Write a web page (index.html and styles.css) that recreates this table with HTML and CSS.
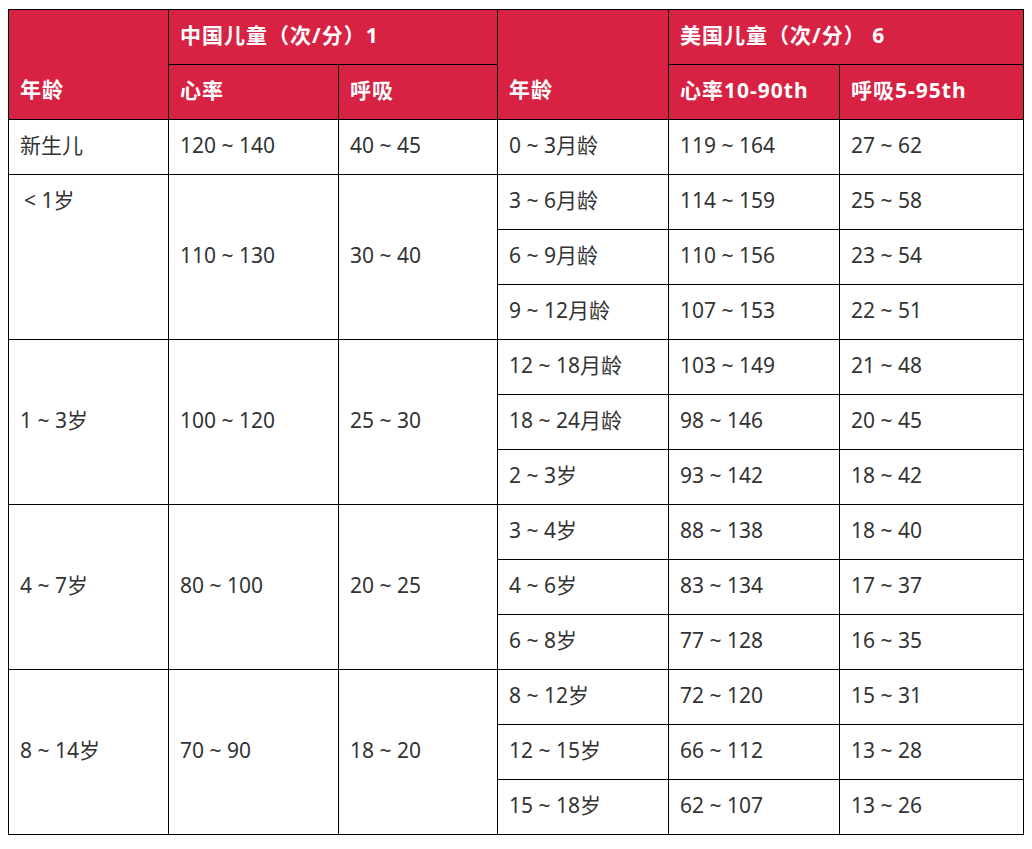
FILE: index.html
```html
<!DOCTYPE html>
<html lang="zh-CN">
<head>
<meta charset="utf-8">
<link rel="stylesheet" href="styles.css">
</head>
<body>
<table class="rates">
  <colgroup>
    <col class="c1"><col class="c2"><col class="c3"><col class="c4"><col class="c5"><col class="c6">
  </colgroup>
  <thead>
    <tr>
      <th rowspan="2" class="bottom">年龄</th>
      <th colspan="2">中国儿童（次/分）1</th>
      <th rowspan="2" class="bottom">年龄</th>
      <th colspan="2">美国儿童（次/分） 6</th>
    </tr>
    <tr>
      <th>心率</th>
      <th>呼吸</th>
      <th>心率10-90th</th>
      <th>呼吸5-95th</th>
    </tr>
  </thead>
  <tbody>
    <tr><td>新生儿</td><td>120 ~ 140</td><td>40 ~ 45</td><td>0 ~ 3月龄</td><td>119 ~ 164</td><td>27 ~ 62</td></tr>
    <tr><td rowspan="3" class="top">&lt; 1岁</td><td rowspan="3">110 ~ 130</td><td rowspan="3">30 ~ 40</td><td>3 ~ 6月龄</td><td>114 ~ 159</td><td>25 ~ 58</td></tr>
    <tr><td>6 ~ 9月龄</td><td>110 ~ 156</td><td>23 ~ 54</td></tr>
    <tr><td>9 ~ 12月龄</td><td>107 ~ 153</td><td>22 ~ 51</td></tr>
    <tr><td rowspan="3">1 ~ 3岁</td><td rowspan="3">100 ~ 120</td><td rowspan="3">25 ~ 30</td><td>12 ~ 18月龄</td><td>103 ~ 149</td><td>21 ~ 48</td></tr>
    <tr><td>18 ~ 24月龄</td><td>98 ~ 146</td><td>20 ~ 45</td></tr>
    <tr><td>2 ~ 3岁</td><td>93 ~ 142</td><td>18 ~ 42</td></tr>
    <tr><td rowspan="3">4 ~ 7岁</td><td rowspan="3">80 ~ 100</td><td rowspan="3">20 ~ 25</td><td>3 ~ 4岁</td><td>88 ~ 138</td><td>18 ~ 40</td></tr>
    <tr><td>4 ~ 6岁</td><td>83 ~ 134</td><td>17 ~ 37</td></tr>
    <tr><td>6 ~ 8岁</td><td>77 ~ 128</td><td>16 ~ 35</td></tr>
    <tr><td rowspan="3">8 ~ 14岁</td><td rowspan="3">70 ~ 90</td><td rowspan="3">18 ~ 20</td><td>8 ~ 12岁</td><td>72 ~ 120</td><td>15 ~ 31</td></tr>
    <tr><td>12 ~ 15岁</td><td>66 ~ 112</td><td>13 ~ 28</td></tr>
    <tr><td>15 ~ 18岁</td><td>62 ~ 107</td><td>13 ~ 26</td></tr>
  </tbody>
</table>
</body>
</html>
```
FILE: styles.css
```css
body {
  margin: 8px;
  background: #ffffff;
  font-family: "Noto Sans", "Noto Sans CJK SC", sans-serif;
}

.rates {
  border-collapse: collapse;
  table-layout: fixed;
  width: 1015px;
  margin-top: 1px;
}

.c1 { width: 160px; }
.c2 { width: 170px; }
.c3 { width: 159px; }
.c4 { width: 171px; }
.c5 { width: 171px; }
.c6 { width: 184px; }

.rates th,
.rates td {
  border: 1px solid #000;
  height: 50px;
  padding: 0 11px 4px;
  text-align: left;
  vertical-align: middle;
  font-size: 21px;
  line-height: 24px;
  white-space: nowrap;
}

.rates th {
  background: #d82243;
  color: #ffffff;
  font-weight: 700;
  letter-spacing: 1px;
}

.rates th.bottom {
  vertical-align: bottom;
  padding-bottom: 18px;
}

.rates td {
  color: #333333;
  font-weight: 400;
}

.rates td.top {
  vertical-align: top;
  padding-top: 13px;
  padding-left: 15px;
}
```
